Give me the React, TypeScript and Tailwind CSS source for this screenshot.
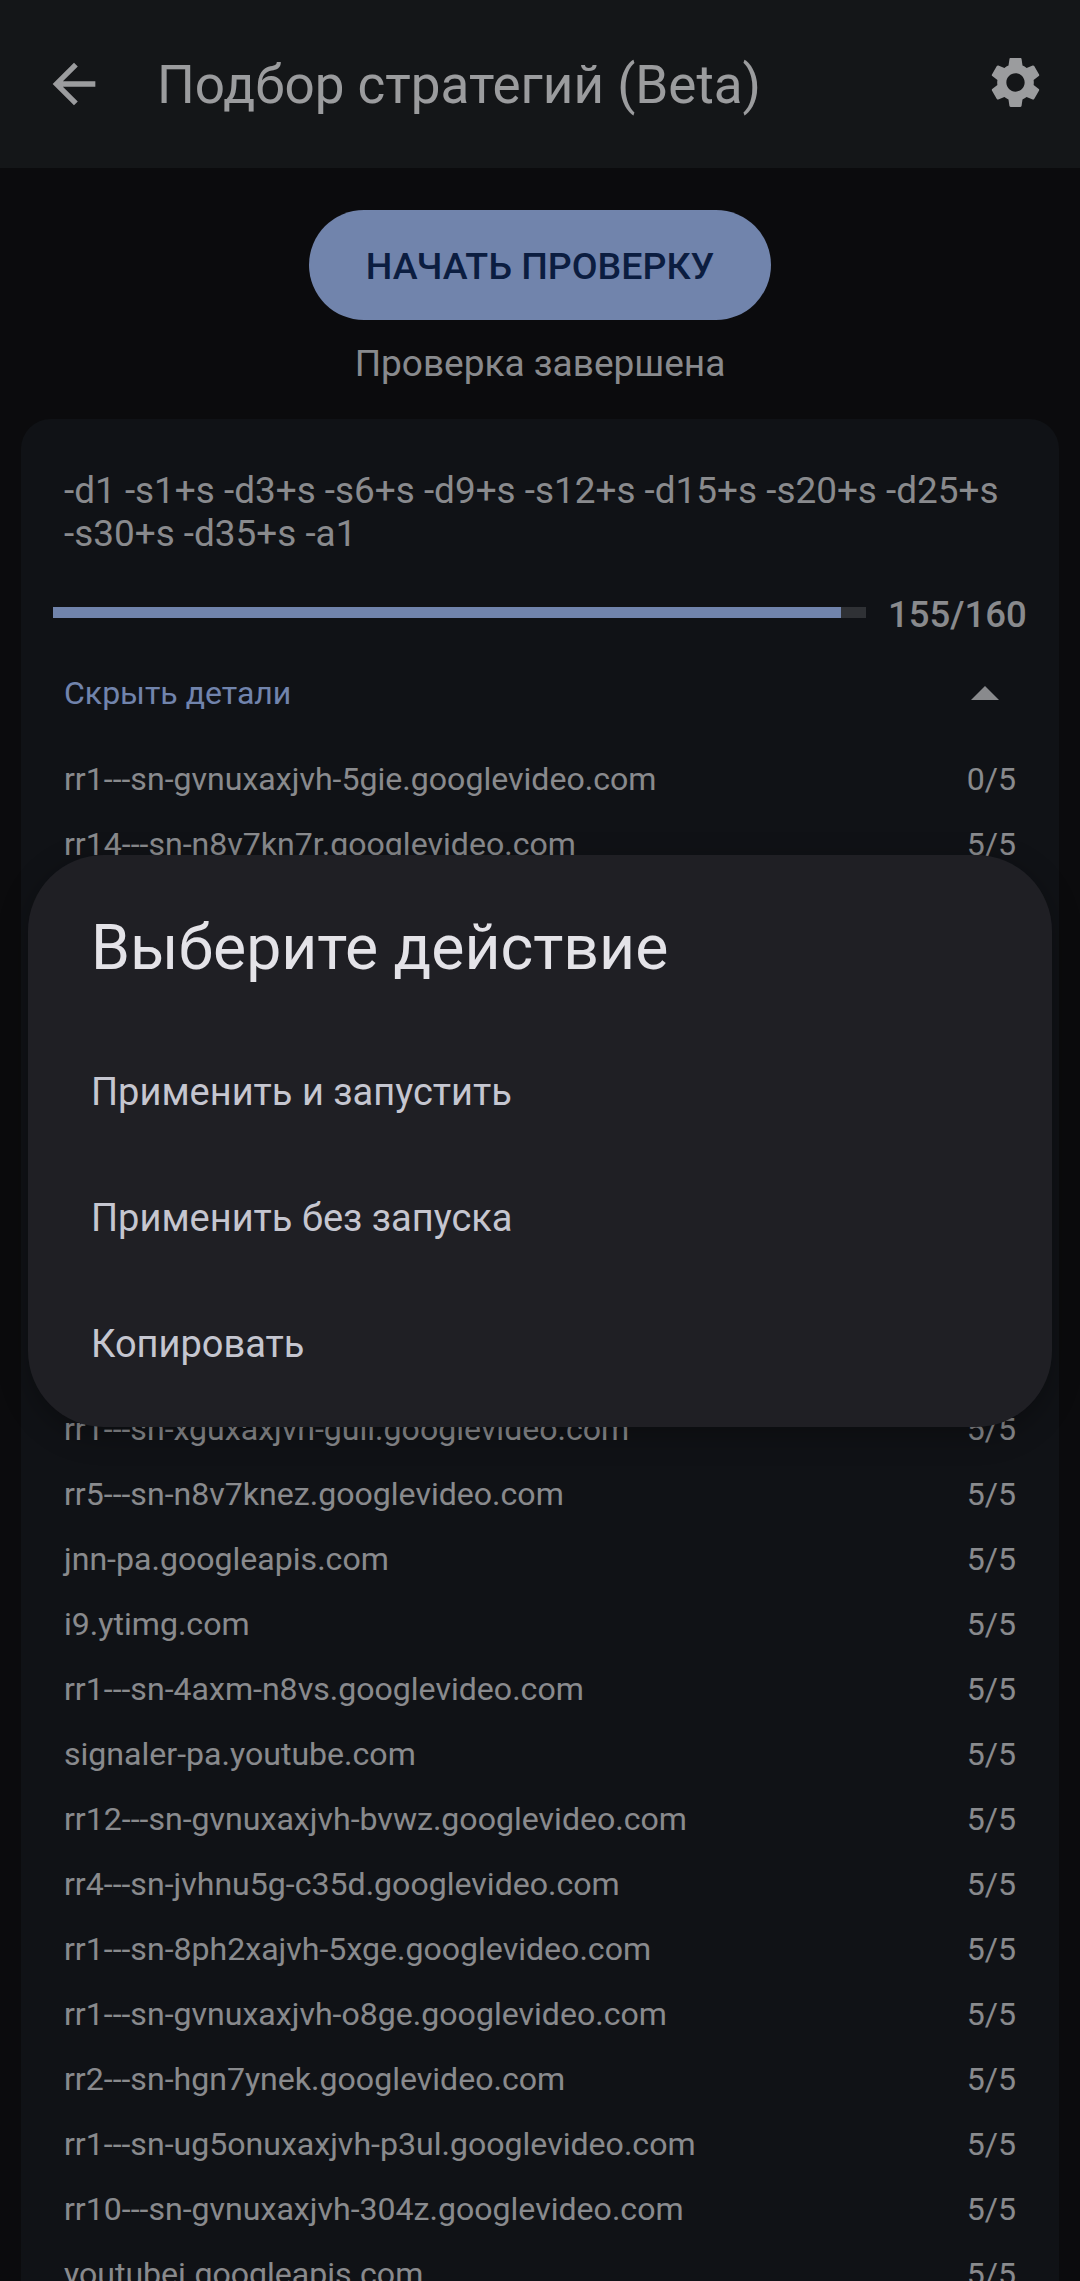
const TOP_HOSTS: [string, string][] = [
  ["rr1---sn-gvnuxaxjvh-5gie.googlevideo.com", "0/5"],
  ["rr14---sn-n8v7kn7r.googlevideo.com", "5/5"],
];

const BOTTOM_HOSTS: [string, string][] = [
  ["rr1---sn-xguxaxjvh-guil.googlevideo.com", "5/5"],
  ["rr5---sn-n8v7knez.googlevideo.com", "5/5"],
  ["jnn-pa.googleapis.com", "5/5"],
  ["i9.ytimg.com", "5/5"],
  ["rr1---sn-4axm-n8vs.googlevideo.com", "5/5"],
  ["signaler-pa.youtube.com", "5/5"],
  ["rr12---sn-gvnuxaxjvh-bvwz.googlevideo.com", "5/5"],
  ["rr4---sn-jvhnu5g-c35d.googlevideo.com", "5/5"],
  ["rr1---sn-8ph2xajvh-5xge.googlevideo.com", "5/5"],
  ["rr1---sn-gvnuxaxjvh-o8ge.googlevideo.com", "5/5"],
  ["rr2---sn-hgn7ynek.googlevideo.com", "5/5"],
  ["rr1---sn-ug5onuxaxjvh-p3ul.googlevideo.com", "5/5"],
  ["rr10---sn-gvnuxaxjvh-304z.googlevideo.com", "5/5"],
  ["youtubei.googleapis.com", "5/5"],
];

const ACTIONS = ["Применить и запустить", "Применить без запуска", "Копировать"];

function HostRow({ host, score }: { host: string; score: string }) {
  return (
    <div className="flex h-[65px] items-center justify-between text-[32.1px] text-[#c4c6cb]">
      <span>{host}</span>
      <span>{score}</span>
    </div>
  );
}

export default function App() {
  return (
    <div className="relative h-[2281px] w-[1080px] overflow-hidden bg-[#101114] font-['Roboto',sans-serif]">
      {/* Top bar */}
      <div className="flex h-[168px] items-center justify-between bg-[#1e2023] pl-[42px] pr-[34px]">
        <div className="flex items-center">
          <svg viewBox="0 0 24 24" className="h-[64px] w-[64px] fill-[#dfe0e3]">
            <path d="M20 11H7.83l5.59-5.59L12 4l-8 8 8 8 1.41-1.41L7.83 13H20v-2z" />
          </svg>
          <span className="ml-[51px] mt-[3px] text-[53px] leading-none text-[#dfe0e3]">Подбор стратегий (Beta)</span>
        </div>
        <svg viewBox="0 0 24 24" className="mb-[3px] h-[61px] w-[61px] fill-[#dfe0e3]">
          <path d="M19.14 12.94c.04-.3.06-.61.06-.94 0-.32-.02-.64-.07-.94l2.03-1.58c.18-.14.23-.41.12-.61l-1.92-3.32c-.12-.22-.37-.29-.59-.22l-2.39.96c-.5-.38-1.03-.7-1.62-.94l-.36-2.54c-.04-.24-.24-.41-.48-.41h-3.84c-.24 0-.43.17-.47.41l-.36 2.54c-.59.24-1.13.57-1.62.94l-2.39-.96c-.22-.08-.47 0-.59.22L2.74 8.87c-.12.21-.08.47.12.61l2.03 1.58c-.05.3-.09.63-.09.94s.02.64.07.94l-2.03 1.58c-.18.14-.23.41-.12.61l1.92 3.32c.12.22.37.29.59.22l2.39-.96c.5.38 1.03.7 1.62.94l.36 2.54c.05.24.24.41.48.41h3.84c.24 0 .44-.17.47-.41l.36-2.54c.59-.24 1.13-.56 1.62-.94l2.39.96c.22.08.47 0 .59-.22l1.92-3.32c.12-.22.07-.47-.12-.61l-2.01-1.58zM12 15.6c-1.98 0-3.6-1.62-3.6-3.6s1.62-3.6 3.6-3.6 3.6 1.62 3.6 3.6-1.62 3.6-3.6 3.6z" />
        </svg>
      </div>

      {/* Start button + status */}
      <div className="flex flex-col items-center pt-[42px]">
        <div className="flex h-[110px] w-[462px] items-center justify-center rounded-[55px] bg-[#a3bdf6] pt-[2px] text-[37.5px] font-medium text-[#102a5c]">
          НАЧАТЬ ПРОВЕРКУ
        </div>
        <div className="mt-[23px] text-[37px] leading-[42px] text-[#c4c6cb]">Проверка завершена</div>
      </div>

      {/* Result card */}
      <div className="mx-[21px] mt-[34px] rounded-t-[30px] bg-[#181b20] pt-[50px]">
        <div className="px-[43px] text-[36.9px] leading-[43px] text-[#c4c6cb]">
          -d1 -s1+s -d3+s -s6+s -d9+s -s12+s -d15+s -s20+s -d25+s
          <br />
          -s30+s -d35+s -a1
        </div>
        <div className="mt-[39px] flex items-center pl-[32px]">
          <div className="mb-[6px] h-[11px] w-[813px] bg-[#44474c]">
            <div className="h-full bg-[#a3bdf6]" style={{ width: `${(155 / 160) * 100}%` }} />
          </div>
          <span className="ml-[22px] text-[36.5px] font-medium leading-[42px] text-[#c4c6cb]">155/160</span>
        </div>
        <div className="mt-[35px] flex items-center justify-between pl-[43px] pr-[60px]">
          <span className="text-[32px] leading-[44px] text-[#a3bdf6]">Скрыть детали</span>
          <svg viewBox="0 0 28 14" className="h-[14px] w-[28px] fill-[#c4c6cb]">
            <polygon points="14,0 28,14 0,14" />
          </svg>
        </div>
        <div className="mt-[32px] flex flex-col px-[43px]">
          {TOP_HOSTS.map(([host, score]) => (
            <HostRow key={host} host={host} score={score} />
          ))}
          {/* rows behind the dialog */}
          <div className="h-[520px]" />
          {BOTTOM_HOSTS.map(([host, score]) => (
            <HostRow key={host} host={host} score={score} />
          ))}
        </div>
      </div>

      {/* Scrim + action dialog */}
      <div className="absolute inset-0 flex items-center justify-center bg-black/30">
        <div className="w-[1024px] rounded-[76px] bg-[#1f1f24] px-[63px] pb-[19px] pt-[55px] shadow-[0_8px_30px_rgba(0,0,0,0.3)]">
          <div className="text-[62.5px] leading-[76px] text-[#e4e3e8]">Выберите действие</div>
          <div className="mt-[44px] flex flex-col">
            {ACTIONS.map((action) => (
              <div key={action} className="flex h-[126px] items-center text-[38px] text-[#c5c6d0]">
                {action}
              </div>
            ))}
          </div>
        </div>
      </div>
    </div>
  );
}
